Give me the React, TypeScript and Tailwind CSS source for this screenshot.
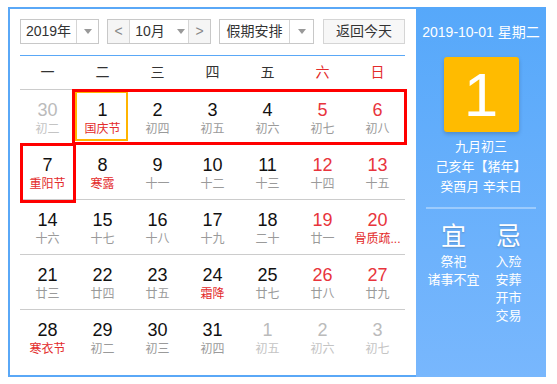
import React from "react";

type Day = {
  day: number;
  lunar: string;
  other?: boolean;
  weekend?: boolean;
  festival?: boolean;
  selected?: boolean;
};

const weeks: Day[][] = [
  [
    { day: 30, lunar: "初二", other: true },
    { day: 1, lunar: "国庆节", festival: true, selected: true },
    { day: 2, lunar: "初四" },
    { day: 3, lunar: "初五" },
    { day: 4, lunar: "初六" },
    { day: 5, lunar: "初七", weekend: true },
    { day: 6, lunar: "初八", weekend: true },
  ],
  [
    { day: 7, lunar: "重阳节", festival: true },
    { day: 8, lunar: "寒露", festival: true },
    { day: 9, lunar: "十一" },
    { day: 10, lunar: "十二" },
    { day: 11, lunar: "十三" },
    { day: 12, lunar: "十四", weekend: true },
    { day: 13, lunar: "十五", weekend: true },
  ],
  [
    { day: 14, lunar: "十六" },
    { day: 15, lunar: "十七" },
    { day: 16, lunar: "十八" },
    { day: 17, lunar: "十九" },
    { day: 18, lunar: "二十" },
    { day: 19, lunar: "廿一", weekend: true },
    { day: 20, lunar: "骨质疏...", weekend: true, festival: true },
  ],
  [
    { day: 21, lunar: "廿三" },
    { day: 22, lunar: "廿四" },
    { day: 23, lunar: "廿五" },
    { day: 24, lunar: "霜降", festival: true },
    { day: 25, lunar: "廿七" },
    { day: 26, lunar: "廿八", weekend: true },
    { day: 27, lunar: "廿九", weekend: true },
  ],
  [
    { day: 28, lunar: "寒衣节", festival: true },
    { day: 29, lunar: "初二" },
    { day: 30, lunar: "初三" },
    { day: 31, lunar: "初四" },
    { day: 1, lunar: "初五", other: true },
    { day: 2, lunar: "初六", other: true },
    { day: 3, lunar: "初七", other: true },
  ],
];

const weekdays = ["一", "二", "三", "四", "五", "六", "日"];

function Caret() {
  return <span className="h-0 w-0 border-x-[4px] border-t-[5px] border-x-transparent border-t-[#999]" />;
}

function DayCell({ item }: { item: Day }) {
  const numberClass = item.other
    ? "text-[#bbbbbb]"
    : item.weekend
      ? "text-[#e8343c]"
      : "text-[#111]";
  const lunarClass = item.other
    ? "text-[#c4c4c4]"
    : item.festival
      ? "text-[#e32b2b]"
      : "text-[#9a9a9a]";

  return (
    <div className="relative flex flex-col items-center pt-[9px]">
      {item.selected && (
        <div className="absolute left-0 top-[1px] h-[50px] w-[53px] border-2 border-[#ffb400]" />
      )}
      <span className={`text-[18px] leading-[22px] ${numberClass}`}>{item.day}</span>
      <span className={`text-[12px] leading-[16px] ${lunarClass}`}>{item.lunar}</span>
    </div>
  );
}

export default function App() {
  return (
    <div
      className="ml-[8px] mt-[7px] flex h-[370px] w-[538px]"
      style={{ fontFamily: '"Liberation Sans", "Noto Sans CJK SC", sans-serif' }}
    >
      <div className="flex h-full w-[408px] flex-col border-y-2 border-l-2 border-[#5aa8f7] bg-white pl-[10px] pr-[11px] pt-[10px]">
        <div className="flex h-[25px] items-stretch text-[14px] text-[#333]">
          <div className="flex w-[79px] border border-[#c8c8c8]">
            <div className="flex w-[55px] items-center justify-center">2019年</div>
            <div className="flex flex-1 items-center justify-center border-l border-[#d5d5d5]">
              <Caret />
            </div>
          </div>
          <div className="ml-[8px] flex w-[104px] border border-[#c8c8c8]">
            <div className="flex w-[21px] items-center justify-center bg-[#f5f5f5] text-[#888]">&lt;</div>
            <div className="flex flex-1 items-center justify-center gap-[12px] border-x border-[#d5d5d5] pl-[2px]">
              <span>10月</span>
              <Caret />
            </div>
            <div className="flex w-[21px] items-center justify-center bg-[#f5f5f5] text-[#888]">&gt;</div>
          </div>
          <div className="ml-[8px] flex w-[95px] border border-[#c8c8c8]">
            <div className="flex w-[69px] items-center justify-center">假期安排</div>
            <div className="flex flex-1 items-center justify-center border-l border-[#d5d5d5]">
              <Caret />
            </div>
          </div>
          <button
            type="button"
            className="ml-[9px] flex w-[82px] items-center justify-center border border-[#d5d5d5] bg-[#f7f7f7] text-[14px] text-[#333]"
          >
            返回今天
          </button>
        </div>

        <div className="mt-[11px] h-px bg-[#5aa8f7]" />

        <div className="grid h-[34px] grid-cols-7 items-center border-b border-[#cccccc] pb-[1px] text-[14px]">
          {weekdays.map((w, i) => (
            <span key={w} className={`text-center ${i >= 5 ? "text-[#e32b2b]" : "text-[#333]"}`}>
              {w}
            </span>
          ))}
        </div>

        <div className="relative">
          {weeks.map((week, rowIndex) => (
            <div
              key={rowIndex}
              className={`grid h-[55px] grid-cols-7 ${rowIndex < weeks.length - 1 ? "border-b border-[#cccccc]" : ""}`}
            >
              {week.map((item, i) => (
                <DayCell key={`${rowIndex}-${i}`} item={item} />
              ))}
            </div>
          ))}
          <div className="pointer-events-none absolute left-[52px] top-[-1px] h-[56px] w-[335px] border-[3px] border-[#ff0000]" />
          <div className="pointer-events-none absolute left-0 top-[53px] h-[60px] w-[56px] border-[3px] border-[#ff0000]" />
        </div>
      </div>

      <div className="flex h-full w-[130px] flex-col items-center bg-gradient-to-b from-[#56a8fa] to-[#78b7fd] text-white">
        <div className="pt-[15px] text-[14px] leading-[20px]">2019-10-01 星期二</div>
        <div className="mt-[15px] flex h-[75px] w-[75px] items-center justify-center rounded-[3px] bg-[#ffbb00] text-[62px] leading-none shadow-[0_2px_4px_rgba(0,0,0,0.2)]">
          1
        </div>
        <div className="mt-[5px] flex flex-col items-center text-[13px] leading-[20px]">
          <span>九月初三</span>
          <span>己亥年【猪年】</span>
          <span>癸酉月 辛未日</span>
        </div>
        <div className="mt-[10px] h-[2px] w-[110px] bg-[#9ccbfd]" />
        <div className="mt-[13px] grid w-[110px] grid-cols-2">
          <div className="flex flex-col items-center">
            <span className="text-[25px] leading-[28px] [text-shadow:0_1px_2px_rgba(0,0,0,0.2)]">宜</span>
            <div className="mt-[3px] flex flex-col items-center text-[13px] leading-[18px]">
              <span>祭祀</span>
              <span>诸事不宜</span>
            </div>
          </div>
          <div className="flex flex-col items-center">
            <span className="text-[25px] leading-[28px] [text-shadow:0_1px_2px_rgba(0,0,0,0.2)]">忌</span>
            <div className="mt-[3px] flex flex-col items-center text-[13px] leading-[18px]">
              <span>入殓</span>
              <span>安葬</span>
              <span>开市</span>
              <span>交易</span>
            </div>
          </div>
        </div>
      </div>
    </div>
  );
}
